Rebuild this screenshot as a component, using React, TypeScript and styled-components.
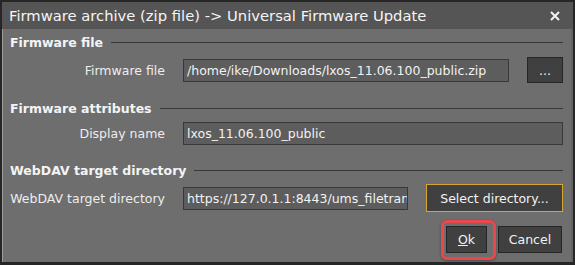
import React from 'react'
import styled, { createGlobalStyle } from 'styled-components'

const GlobalStyle = createGlobalStyle`
  html, body {
    margin: 0;
    padding: 0;
    background: #2b2b2b;
  }
  * {
    box-sizing: border-box;
  }
`;

const Window = styled.div`
  position: relative;
  width: 575px;
  height: 265px;
  border: 2px solid #262626;
  border-bottom-width: 3px;
  background-color: #6e6e6e;
  font-family: 'DejaVu Sans', 'Liberation Sans', sans-serif;
  color: #f2f2f2;
  display: flex;
  flex-direction: column;
  overflow: hidden;
`;

const TitleBar = styled.div`
  height: 27px;
  background-color: #555555;
  display: flex;
  align-items: center;
  justify-content: space-between;
  padding: 0 12px 0 7px;
  font-size: 14.75px;
  color: #f4f4f4;
`;

const CloseButton = styled.div`
  width: 12px;
  height: 12px;
  display: flex;
`;

const Body = styled.div`
  flex: 1;
  display: flex;
  flex-direction: column;
  padding: 5px 10px 0 8px;
  box-shadow: inset 1px 0 0 #9c9c9c, inset -2px 0 0 #646464;
`;

const SectionHeader = styled.div<{ $below: number }>`
  display: flex;
  align-items: center;
  gap: 8px;
  height: 16px;
  font-size: 12.5px;
  font-weight: bold;
  color: #f4f4f4;
  margin-bottom: ${p => p.$below}px;

  &::after {
    content: '';
    flex: 1;
    height: 1px;
    background-color: #383838;
  }
`;

const Row = styled.div<{ $below: number }>`
  display: grid;
  grid-template-columns: 155px 1fr auto;
  align-items: center;
  column-gap: 18px;
  height: 28px;
  margin-bottom: ${p => p.$below}px;
`;

const Label = styled.div`
  font-size: 12.5px;
  text-align: right;
  color: #ededed;
  white-space: nowrap;
`;

const Input = styled.div<{ $span?: boolean }>`
  height: 23px;
  background-color: #5d5d5d;
  border: 1px solid #383838;
  font-size: 12.5px;
  color: #f2f2f2;
  padding: 0 3px;
  display: flex;
  align-items: center;
  white-space: nowrap;
  overflow: hidden;
  grid-column: ${p => (p.$span ? '2 / 4' : 'auto')};
`;

const Button = styled.div<{ $focus?: boolean; $width: number; $height: number }>`
  width: ${p => p.$width}px;
  height: ${p => p.$height}px;
  background-color: #404040;
  border: 1px solid ${p => (p.$focus ? '#d6a431' : '#262626')};
  font-size: 12.5px;
  color: #f2f2f2;
  display: flex;
  align-items: center;
  justify-content: center;
  white-space: nowrap;
`;

const Footer = styled.div`
  display: flex;
  justify-content: flex-end;
  gap: 11px;
  margin-top: 14px;
  padding-right: 1px;
`;

const Highlight = styled.div`
  position: absolute;
  left: 439px;
  top: 218px;
  width: 55px;
  height: 40px;
  border: 3px solid #e9474b;
  border-radius: 6px;
  box-shadow: 0 1px 3px rgba(0, 0, 0, 0.35);
  pointer-events: none;
`;

export default function App() {
  return (
    <>
      <GlobalStyle />
      <Window>
        <TitleBar>
          <span>Firmware archive (zip file) -&gt; Universal Firmware Update</span>
          <CloseButton>
            <svg width="12" height="12" viewBox="0 0 12 12">
              <path d="M2 2 L10 10 M10 2 L2 10" stroke="#f4f4f4" strokeWidth="2" />
            </svg>
          </CloseButton>
        </TitleBar>

        <Body>
          <SectionHeader $below={6}>Firmware file</SectionHeader>
          <Row $below={16}>
            <Label>Firmware file</Label>
            <Input>/home/ike/Downloads/lxos_11.06.100_public.zip</Input>
            <Button $width={36} $height={26}>...</Button>
          </Row>

          <SectionHeader $below={3}>Firmware attributes</SectionHeader>
          <Row $below={15}>
            <Label>Display name</Label>
            <Input $span>lxos_11.06.100_public</Input>
          </Row>

          <SectionHeader $below={6}>WebDAV target directory</SectionHeader>
          <Row $below={0}>
            <Label>WebDAV target directory</Label>
            <Input>https://127.0.1.1:8443/ums_filetran</Input>
            <Button $focus $width={137} $height={28}>Select directory...</Button>
          </Row>

          <Footer>
            <Button $width={41} $height={27}><span><u>O</u>k</span></Button>
            <Button $width={64} $height={27}>Cancel</Button>
          </Footer>
        </Body>

        <Highlight />
      </Window>
    </>
  );
}
